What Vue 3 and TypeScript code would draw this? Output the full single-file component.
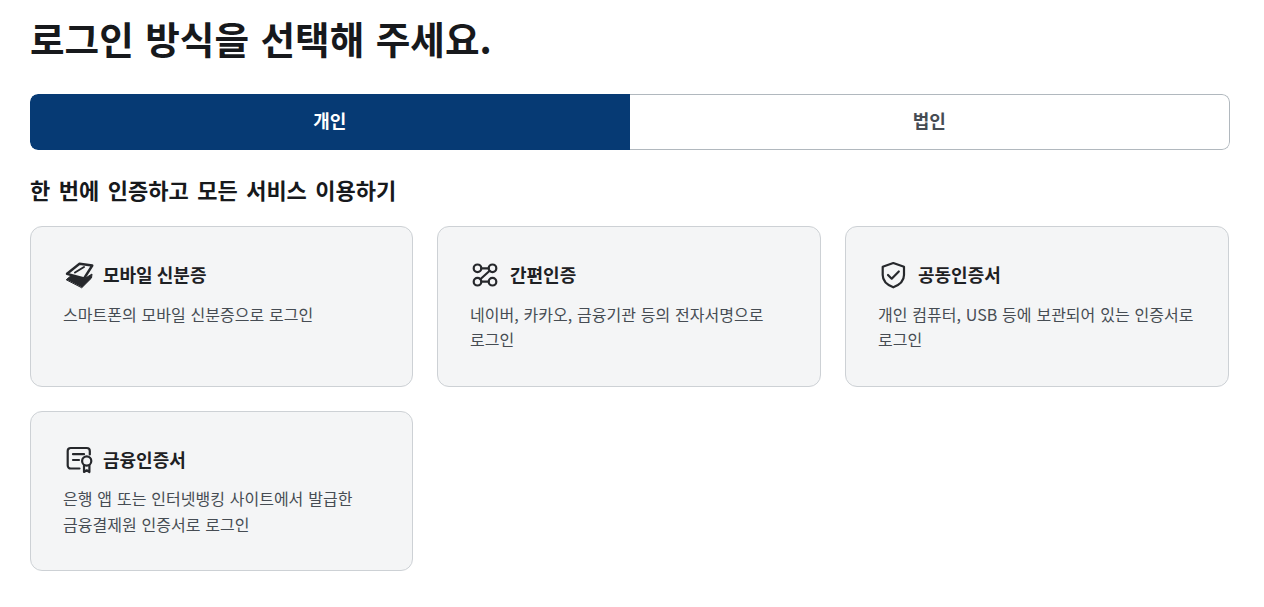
<script setup lang="ts">
interface Method { id: string; title: string; desc: string[] }
const methods: Method[] = [
  { id: 'mobile', title: '모바일 신분증', desc: ['스마트폰의 모바일 신분증으로 로그인'] },
  { id: 'simple', title: '간편인증', desc: ['네이버, 카카오, 금융기관 등의 전자서명으로', '로그인'] },
  { id: 'joint', title: '공동인증서', desc: ['개인 컴퓨터, USB 등에 보관되어 있는 인증서로', '로그인'] },
  { id: 'finance', title: '금융인증서', desc: ['은행 앱 또는 인터넷뱅킹 사이트에서 발급한', '금융결제원 인증서로 로그인'] },
]
</script>

<template>
  <main class="page">
    <h1 class="title">로그인 방식을 선택해 주세요.</h1>
    <div class="tabs">
      <button class="tab active">개인</button>
      <button class="tab">법인</button>
    </div>
    <h2 class="subtitle">한 번에 인증하고 모든 서비스 이용하기</h2>
    <div class="grid">
      <article v-for="m in methods" :key="m.id" class="card">
        <div class="head">
          <svg class="icon" viewBox="0 0 32 32" fill="none" stroke="#26282c" stroke-width="2.2" stroke-linecap="round" stroke-linejoin="round">
            <template v-if="m.id === 'mobile'">
              <path d="M3.500 20.500 10 15l11 5 8-5-.5 4-9.500 9.500z" fill="#26282c" stroke-width="1"/>
              <path d="M16.500 4.800 29.300 6.500 21 19.500 4 14.800z" fill="#f4f5f6" stroke-width="2.400"/>
              <path d="M12 13.500 21 8" stroke-width="2"/>
            </template>
            <template v-else-if="m.id === 'simple'">
              <circle cx="7.500" cy="9.300" r="3.800"/>
              <circle cx="22.500" cy="9.300" r="3.800"/>
              <circle cx="7.500" cy="22.700" r="3.800"/>
              <circle cx="22.500" cy="22.700" r="3.800"/>
              <path d="M11.300 9.300h7.400M11.300 22.700h7.400M19.700 11.800l-9.400 8.400"/>
            </template>
            <template v-else-if="m.id === 'joint'">
              <path d="M15.300 4 26 7.700v8.300c0 5.800-4.300 9.800-10.700 12.300C8.900 25.800 4.700 21.800 4.700 16V7.700z"/>
              <path d="m10 16 3.700 3.700 7.100-7.200"/>
            </template>
            <template v-else>
              <path d="M16.500 24.500H7.700a3 3 0 0 1-3-3V7a3 3 0 0 1 3-3h16.100a3 3 0 0 1 3 3v3.500"/>
              <path d="M10 10.200h11M10 16h6"/>
              <circle cx="23.700" cy="17" r="4.600"/>
              <path d="M21 21.500v6.500l2.700-1.700 2.700 1.700v-6.500"/>
            </template>
          </svg>
          <span class="name">{{ m.title }}</span>
        </div>
        <p class="desc">
          <span v-for="line in m.desc" :key="line" class="line">{{ line }}</span>
        </p>
      </article>
    </div>
  </main>
</template>

<style>
html, body { margin: 0; background: #fff; }
</style>

<style scoped>
.page {
  width: 1200px;
  margin-left: 30px;
  font-family: "Noto Sans CJK KR", "Noto Sans", sans-serif;
  color: #17191c;
}
.title {
  margin: 0;
  height: 94px;
  padding-top: 11px;
  box-sizing: border-box;
  font-size: 37.6px;
  line-height: 54px;
  font-weight: 700;
  word-spacing: 3px;
}
.tabs {
  display: flex;
  height: 56px;
  border-radius: 8px;
  overflow: hidden;
}
.tab {
  flex: 1;
  font: inherit;
  font-size: 18px;
  font-weight: 700;
  background: #fff;
  color: #464c53;
  border: 1px solid #b1b8be;
  border-left: 0;
  border-radius: 0 8px 8px 0;
  padding: 0 0 5px;
}
.tab.active {
  background: #063a74;
  border: 0;
  color: #fff;
  border-radius: 8px 0 0 8px;
}
.subtitle {
  margin: 22px 0 0;
  height: 54.2px;
  font-size: 22px;
  line-height: 34px;
  font-weight: 700;
  word-spacing: 3.5px;
}
.grid {
  display: grid;
  grid-template-columns: 383px 384px 384px;
  gap: 24px;
}
.card {
  box-sizing: border-box;
  height: 160.6px;
  padding: 32px 32px 0;
  background: #f4f5f6;
  border: 1px solid #cdd1d5;
  border-radius: 12px;
}
.head {
  display: flex;
  align-items: center;
  gap: 8px;
  height: 32px;
}
.icon { width: 32px; height: 32px; flex: none; }
.name {
  font-size: 18px;
  font-weight: 700;
  color: #1e2124;
  padding-bottom: 2px;
}
.desc {
  margin: 10.4px 0 0;
  font-size: 16px;
  line-height: 25.6px;
  color: #464c53;
  word-spacing: 1.3px;
}
.line { display: block; white-space: nowrap; }
</style>
